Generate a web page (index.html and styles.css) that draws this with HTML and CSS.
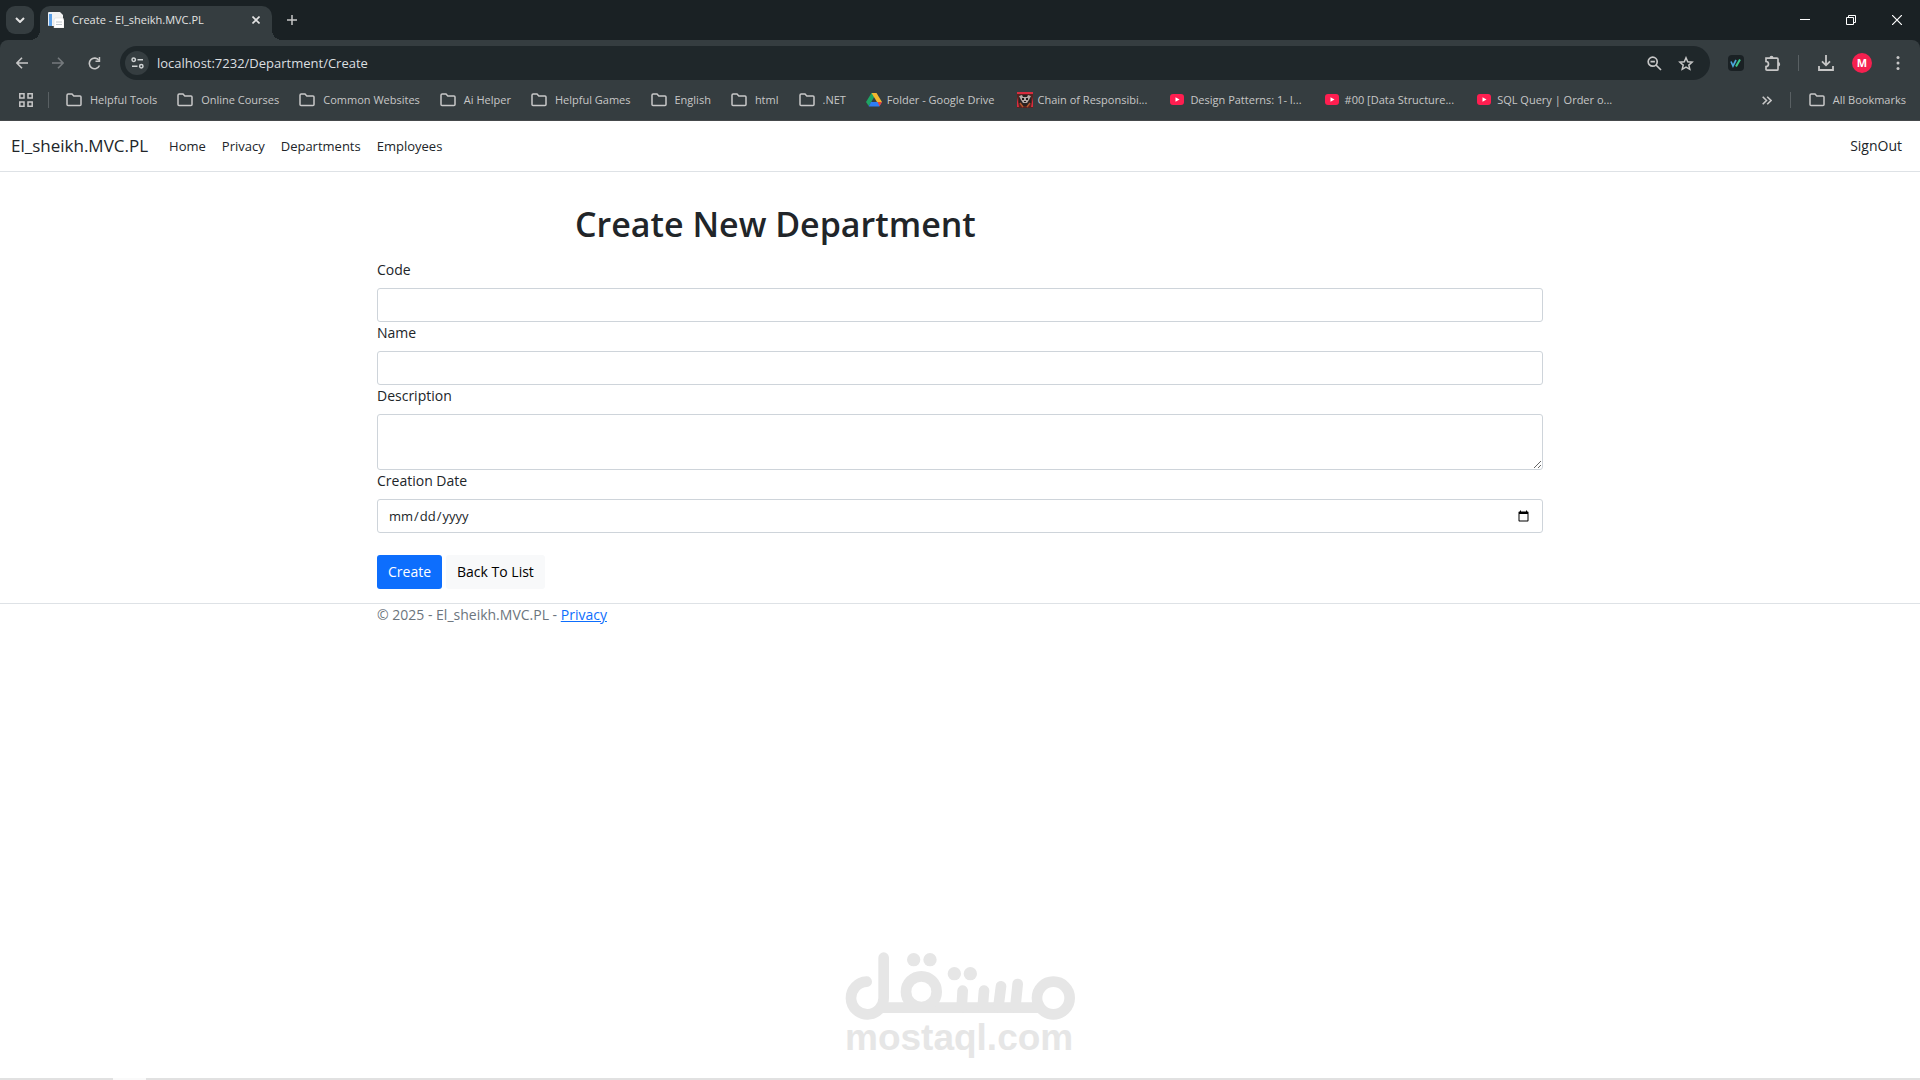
FILE: index.html
```html
<!DOCTYPE html>
<html lang="en">
<head>
  <meta charset="UTF-8">
  <title>Create - El_sheikh.MVC.PL</title>
  <link rel="stylesheet" href="styles.css">
</head>
<body>
  <!-- Shared icons -->
  <svg class="sprite" aria-hidden="true">
    <symbol id="folder" viewBox="0 0 16 14">
      <path d="M1 2.200Q1 1 2.200 1H6l1.800 2H14q1 0 1 1v7.500q0 1-1 1H2q-1 0-1-1z" fill="none" stroke="#c7c7c7" stroke-width="1.500"/>
    </symbol>
    <symbol id="youtube" viewBox="0 0 16 14">
      <rect x="1" y="1" width="14" height="11" rx="3" fill="#ff1e50"/>
      <path d="M6.500 4.200v4.600l4-2.300z" fill="#fff"/>
    </symbol>
  </svg>

  <!-- Browser window -->
  <div class="browser">
    <div class="tab-strip">
      <button class="tab-search" aria-label="Search tabs">
        <svg width="10" height="6" viewBox="0 0 10 6"><path d="M1 1l4 4 4-4" fill="none" stroke="#e3e3e3" stroke-width="2"/></svg>
      </button>
      <div class="tab">
        <svg width="16" height="16" viewBox="0 0 16 16">
          <rect width="9" height="14" rx="1" fill="#e8eef5"/>
          <path d="M1 2h3v12H1z" fill="#5b9fe6"/>
          <path d="M4 0h8l3 3v11H4z" fill="#f2f2f2"/>
          <path d="M7 6h8l1 2v8H6V8z" fill="#fff" stroke="#d5d5d5" stroke-width=".5"/>
          <path d="M8 10h6M8 12.500h6" stroke="#c0c8ce"/>
        </svg>
        <span class="tab-title">Create - El_sheikh.MVC.PL</span>
        <button class="tab-close" aria-label="Close tab">
          <svg width="8" height="8" viewBox="0 0 8 8"><path d="M.5.5l7 7M7.500.5l-7 7" stroke="#e3e3e3" stroke-width="1.600"/></svg>
        </button>
      </div>
      <button class="new-tab" aria-label="New tab">
        <svg width="10" height="10" viewBox="0 0 10 10"><path d="M5 0v10M0 5h10" stroke="#c7c7c7" stroke-width="1.500"/></svg>
      </button>
      <div class="window-controls">
        <button aria-label="Minimize"><svg width="10" height="10" viewBox="0 0 10 10"><path d="M0 4.500h10" stroke="#fff"/></svg></button>
        <button aria-label="Restore"><svg width="10" height="10" viewBox="0 0 10 10"><path d="M.5 2.500h7v7h-7zM2.500 2.500v-2h7v7h-2" fill="none" stroke="#fff"/></svg></button>
        <button aria-label="Close"><svg width="10" height="10" viewBox="0 0 10 10"><path d="M0 0l10 10M10 0L0 10" stroke="#fff" stroke-width="1.200"/></svg></button>
      </div>
    </div>

    <div class="toolbar">
      <button class="nav-btn" aria-label="Back">
        <svg width="12" height="12" viewBox="0 0 12 12"><path d="M12 6H1M6 .7L.9 6 6 11.300" fill="none" stroke="#c7c7c7" stroke-width="1.600"/></svg>
      </button>
      <button class="nav-btn" aria-label="Forward">
        <svg width="12" height="12" viewBox="0 0 12 12"><path d="M0 6h11M6 .7L11.100 6 6 11.300" fill="none" stroke="#757a7d" stroke-width="1.600"/></svg>
      </button>
      <button class="nav-btn" aria-label="Reload">
        <svg width="13" height="13" viewBox="0 0 13 13"><path d="M11.500 8.500A5.300 5.300 0 1 1 11 3.400" fill="none" stroke="#c7c7c7" stroke-width="1.600"/><path d="M12.200 0v5H7.500V3.500h3.200V0z" fill="#c7c7c7"/></svg>
      </button>
      <div class="omnibox">
        <button class="site-info" aria-label="Site information">
          <svg width="13" height="12" viewBox="0 0 13 12" fill="none" stroke="#d0d3d4" stroke-width="1.500"><circle cx="2.700" cy="2.700" r="1.700"/><path d="M6.500 2.700H12M1 9.300h5.500"/><circle cx="10.300" cy="9.300" r="1.700"/></svg>
        </button>
        <input class="url" type="text" value="localhost:7232/Department/Create" aria-label="Address">
        <button class="omni-btn" aria-label="Zoom">
          <svg width="15" height="15" viewBox="0 0 15 15" fill="none" stroke="#c7c7c7" stroke-width="1.700"><circle cx="5.700" cy="5.700" r="4.500"/><path d="M9 9l5 5M3.500 5.700h4.400"/></svg>
        </button>
        <button class="omni-btn" aria-label="Bookmark this tab">
          <svg width="16" height="15" viewBox="0 0 16 15"><path d="M8 1.800l1.700 4 4.400.4-3.300 2.900 1 4.200L8 11.100l-3.800 2.200 1-4.200L1.900 6.200l4.400-.4z" fill="none" stroke="#c7c7c7" stroke-width="1.500"/></svg>
        </button>
      </div>
      <div class="toolbar-icons">
        <button class="tool-btn" aria-label="Web extension">
          <svg width="16" height="16" viewBox="0 0 16 16"><rect width="16" height="16" rx="4" fill="#1a2124"/><path d="M3 6.500L5 11l3-6" fill="none" stroke="#4aa8dc" stroke-width="1.700"/><path d="M8 11.500l4-7" stroke="#3fc98a" stroke-width="2"/></svg>
        </button>
        <button class="tool-btn" aria-label="Extensions">
          <svg width="17" height="17" viewBox="0 0 17 17"><path d="M2 3.200h11q1 0 1 1v10q0 1-1 1H3q-1 0-1-1V11.500a2.400 2.400 0 0 0 0-5V3.200z" fill="none" stroke="#c7c7c7" stroke-width="1.700"/><path d="M5.500 3a2 2.200 0 0 1 4 0zM14 7a2.200 2.200 0 0 1 0 4.400z" fill="#c7c7c7"/></svg>
        </button>
        <span class="separator"></span>
        <button class="tool-btn" aria-label="Downloads">
          <svg width="16" height="16" viewBox="0 0 16 16" fill="none" stroke="#c7c7c7" stroke-width="1.800"><path d="M8 0v10M4 6.300l4 4 4-4M1 11v4h14v-4"/></svg>
        </button>
        <button class="tool-btn" aria-label="Profile"><span class="avatar">M</span></button>
        <button class="tool-btn" aria-label="Menu">
          <svg width="4" height="16" viewBox="0 0 4 16" fill="#c7c7c7"><circle cx="2" cy="2.500" r="1.500"/><circle cx="2" cy="8" r="1.500"/><circle cx="2" cy="13.500" r="1.500"/></svg>
        </button>
      </div>
    </div>

    <div class="bookmarks">
      <button class="apps" aria-label="Apps">
        <svg width="14" height="14" viewBox="0 0 14 14" fill="none" stroke="#c7c7c7" stroke-width="1.500"><path d="M.8.8h4.200v4.200H.8zM9 .8h4.200v4.200H9zM.8 9h4.200v4.200H.8zM9 9h4.200v4.200H9z"/></svg>
      </button>
      <span class="separator"></span>
      <nav class="bookmark-list">
        <a href="#"><svg class="icon"><use href="#folder"/></svg><span>Helpful Tools</span></a>
        <a href="#"><svg class="icon"><use href="#folder"/></svg><span>Online Courses</span></a>
        <a href="#"><svg class="icon"><use href="#folder"/></svg><span>Common Websites</span></a>
        <a href="#"><svg class="icon"><use href="#folder"/></svg><span>Ai Helper</span></a>
        <a href="#"><svg class="icon"><use href="#folder"/></svg><span>Helpful Games</span></a>
        <a href="#"><svg class="icon"><use href="#folder"/></svg><span>English</span></a>
        <a href="#"><svg class="icon"><use href="#folder"/></svg><span>html</span></a>
        <a href="#"><svg class="icon"><use href="#folder"/></svg><span>.NET</span></a>
        <a href="#" class="page-link">
          <svg class="icon" viewBox="0 0 16 14"><path d="M5.500 0h5L5 9.500 2.700 13 0 9z" fill="#1fa463"/><path d="M5.500 0h5L16 9h-5z" fill="#f4b72f"/><path d="M5 9h11l-2.700 4.500H2.700z" fill="#2e7df6"/><path d="M11.500 9H16l-2.500 4.300z" fill="#ea4335"/></svg>
          <span>Folder - Google Drive</span>
        </a>
        <a href="#" class="page-link">
          <svg class="icon tall" viewBox="0 0 16 16"><rect width="16" height="16" fill="#5a2320"/><path d="M0 0h16v2H0zM0 5l2 10H0zM16 5l-2 10h2z" fill="#d82c3e"/><path d="M2 3h12v8l-3 3H5l-3-3z" fill="#2a2222"/><path d="M2 4l3-1 1 2h4l1-2 3 1-2 4-2 3H6L4 8z" fill="#b5aaa6"/><path d="M5 6h2v2H5zM9 6h2v2H9zM7 9h2v1H7z" fill="#201a1a"/><path d="M3 11l3 4M13 11l-3 4" stroke="#b2562c" stroke-width="1.500"/></svg>
          <span>Chain of Responsibi...</span>
        </a>
        <a href="#" class="page-link"><svg class="icon"><use href="#youtube"/></svg><span>Design Patterns: 1- I...</span></a>
        <a href="#" class="page-link"><svg class="icon"><use href="#youtube"/></svg><span>#00 [Data Structure...</span></a>
        <a href="#" class="page-link"><svg class="icon"><use href="#youtube"/></svg><span>SQL Query | Order o...</span></a>
      </nav>
      <button class="overflow" aria-label="More bookmarks">
        <svg width="10" height="9" viewBox="0 0 10 9"><path d="M.7.7l3.800 3.800L.7 8.300M5.200.7L9 4.500 5.200 8.300" fill="none" stroke="#c7c7c7" stroke-width="1.600"/></svg>
      </button>
      <span class="separator"></span>
      <a href="#" class="all-bookmarks"><svg class="icon"><use href="#folder"/></svg><span>All Bookmarks</span></a>
    </div>
  </div>

  <!-- Site navigation -->
  <header class="navbar">
    <a class="brand" href="#">El_sheikh.MVC.PL</a>
    <nav class="nav-links">
      <a href="#">Home</a>
      <a href="#">Privacy</a>
      <a href="#">Departments</a>
      <a href="#">Employees</a>
    </nav>
    <a class="sign-out" href="#">SignOut</a>
  </header>

  <!-- Department form -->
  <main class="container">
    <h1>Create New Department</h1>
    <form>
      <label for="code">Code</label>
      <input type="text" id="code" name="Code" class="form-control">

      <label for="name">Name</label>
      <input type="text" id="name" name="Name" class="form-control">

      <label for="description">Description</label>
      <textarea id="description" name="Description" class="form-control"></textarea>

      <label for="date">Creation Date</label>
      <input type="date" id="date" name="DateOfCreation" class="form-control">

      <div class="form-actions">
        <button type="submit" class="btn btn-primary">Create</button>
        <a href="#" class="btn btn-light">Back To List</a>
      </div>
    </form>
  </main>

  <footer class="footer">
    <div class="container">&copy; 2025 - El_sheikh.MVC.PL - <a href="#">Privacy</a></div>
  </footer>

  <!-- Watermark -->
  <div class="watermark">
    <svg viewBox="75 65 690 204" role="img" aria-label="مستقل" fill="none" stroke="#e6e6e6" stroke-width="32" stroke-linecap="round">
      <path d="M140 154A49 49 0 1 0 191 202V82"/>
      <path d="M180 232H670" stroke-linecap="butt"/>
      <circle cx="304" cy="184" r="46"/>
      <circle cx="700" cy="203" r="49"/>
      <path d="M428 181l-3 50M492 181l-4 50M543 168l-8 63M593 161l-7 70"/>
      <g fill="#e6e6e6" stroke="none">
        <circle cx="281" cy="88" r="20"/>
        <circle cx="330" cy="88" r="20"/>
        <circle cx="403" cy="130" r="20"/>
        <circle cx="451" cy="130" r="20"/>
      </g>
    </svg>
    <span>mostaql.com</span>
  </div>
  <div class="taskbar-edge"><span></span></div>
</body>
</html>
```

FILE: styles.css
```css
* {
  box-sizing: border-box;
}
body {
  margin: 0;
  min-height: 100vh;
  position: relative;
  font-family: "Open Sans", "Noto Sans", sans-serif;
  font-size: 14px;
  line-height: 22px;
  color: #212529;
  background: #fff;
}
button,
input,
textarea {
  font: inherit;
}
.sprite {
  position: absolute;
  width: 0;
  height: 0;
}

/* Browser window */
.browser {
  background: #1a2124;
  font-size: 11px;
  line-height: 16px;
}
.browser button {
  display: flex;
  align-items: center;
  justify-content: center;
  flex: none;
  padding: 0;
  border: none;
  background: none;
}
.browser a {
  color: #c7c7c7;
  text-decoration: none;
}
.tab-strip {
  display: flex;
  height: 40px;
  padding-left: 6px;
}
.browser .tab-search {
  width: 28px;
  height: 28px;
  margin: 6px 6px 0 0;
  border-radius: 9px;
  background: #353d40;
}
.tab {
  position: relative;
  display: flex;
  align-items: center;
  gap: 8px;
  width: 232px;
  height: 34px;
  margin-top: 6px;
  padding: 0 12px 6px 8px;
  border-radius: 10px 10px 0 0;
  background: #353d40;
  color: #e3e3e3;
}
/* Curved feet of the active tab */
.tab::before,
.tab::after {
  content: "";
  position: absolute;
  bottom: 0;
  width: 10px;
  height: 10px;
}
.tab::before {
  right: 100%;
  background: radial-gradient(circle at 0 0, transparent 10px, #353d40 10px);
}
.tab::after {
  left: 100%;
  background: radial-gradient(circle at 100% 0, transparent 10px, #353d40 10px);
}
.tab-title {
  flex: 1;
  white-space: nowrap;
}
.new-tab {
  width: 40px;
}
.window-controls {
  display: flex;
  margin-left: auto;
}
.window-controls button {
  width: 46px;
}
.toolbar {
  display: flex;
  align-items: center;
  height: 46px;
  padding-left: 4px;
  border-radius: 8px 8px 0 0;
  background: #353d40;
}
.nav-btn {
  width: 36px;
  height: 34px;
}
.omnibox {
  display: flex;
  align-items: center;
  flex: 1;
  height: 34px;
  margin-left: 8px;
  padding: 0 8px 0 5px;
  border-radius: 17px;
  background: #1f272a;
}
.browser .site-info {
  width: 24px;
  height: 24px;
  border-radius: 50%;
  background: #353d40;
}
.url {
  flex: 1;
  padding: 0 8px;
  border: none;
  outline: none;
  background: none;
  color: #dcdfe0;
  font-size: 13px;
}
.omni-btn {
  width: 32px;
}
.toolbar-icons {
  display: flex;
  align-items: center;
  padding: 0 4px 0 8px;
}
.tool-btn {
  width: 36px;
  height: 34px;
}
.separator {
  flex: none;
  width: 1px;
  height: 16px;
  background: #596063;
}
.toolbar-icons .separator {
  margin: 0 9px 0 8px;
}
.avatar {
  width: 20px;
  height: 20px;
  border-radius: 50%;
  background: #f5204f;
  color: #fff;
  font-size: 11px;
  font-weight: bold;
  line-height: 20px;
}
.bookmarks {
  display: flex;
  align-items: center;
  height: 35px;
  padding: 0 14px 6px 19px;
  border-bottom: 1px solid #45494b;
  background: #353d40;
}
.apps {
  margin-right: 15px;
}
.bookmark-list {
  display: flex;
  flex: 1;
  gap: 20px;
  padding-left: 17px;
}
.bookmarks a {
  display: flex;
  align-items: center;
  gap: 8px;
  white-space: nowrap;
}
.bookmarks .page-link {
  gap: 5px;
}
.page-link + .page-link {
  margin-left: 2px;
}
.icon {
  flex: none;
  width: 16px;
  height: 14px;
}
.tall {
  height: 16px;
}
.overflow {
  margin-right: 18px;
}
.all-bookmarks {
  margin-left: 18px;
}

/* Site navigation */
.navbar {
  display: flex;
  align-items: center;
  height: 51px;
  padding: 0 18px 0 11px;
  border-bottom: 1px solid #dee2e6;
}
.navbar a {
  color: #212529;
  text-decoration: none;
}
.navbar .brand {
  margin-right: 21px;
  font-size: 17px;
}
.nav-links {
  display: flex;
  gap: 16px;
  font-size: 13px;
}
.sign-out {
  margin-left: auto;
}

/* Form */
.container {
  max-width: 1188px;
  margin: 0 auto;
  padding: 0 11px;
}
h1 {
  margin: 0;
  padding: 31px 0 13px 198px;
  font-size: 34px;
  font-weight: 600;
  line-height: 43px;
}
label {
  display: block;
  margin-bottom: 7px;
}
.form-control {
  display: block;
  width: 100%;
  height: 34px;
  padding: 5px 10px;
  border: 1px solid #ced4da;
  border-radius: 3px;
  background: #fff;
  color: #212529;
}
input[type="date"] {
  font-size: 13px;
}
textarea.form-control {
  height: 56px;
  resize: vertical;
}
.form-actions {
  display: flex;
  gap: 4px;
  padding: 22px 0 14px;
}
.btn {
  padding: 5px 10px;
  border: 1px solid transparent;
  border-radius: 3px;
  line-height: 22px;
  text-decoration: none;
}
.btn-primary {
  background: #0d6efd;
  color: #fff;
}
.btn-light {
  background: #f8f9fa;
  color: #000;
}
.footer {
  border-top: 1px solid #dee2e6;
  color: #6c757d;
}
.footer a {
  color: #0d6efd;
}

/* Watermark over the page */
.watermark {
  position: absolute;
  bottom: 24px;
  left: 50%;
  width: 230px;
  margin-left: -115px;
  color: #e6e6e6;
  font-family: "Liberation Sans", Arial, sans-serif;
  font-size: 37px;
  font-weight: bold;
  line-height: 36px;
}
.watermark svg {
  display: block;
  width: 100%;
}
.taskbar-edge {
  position: absolute;
  bottom: 0;
  left: 0;
  right: 0;
  height: 2px;
  padding-left: 113px;
  background: #e1e1e1;
}
.taskbar-edge span {
  display: block;
  width: 33px;
  height: 2px;
  background: #fafafa;
}
```
